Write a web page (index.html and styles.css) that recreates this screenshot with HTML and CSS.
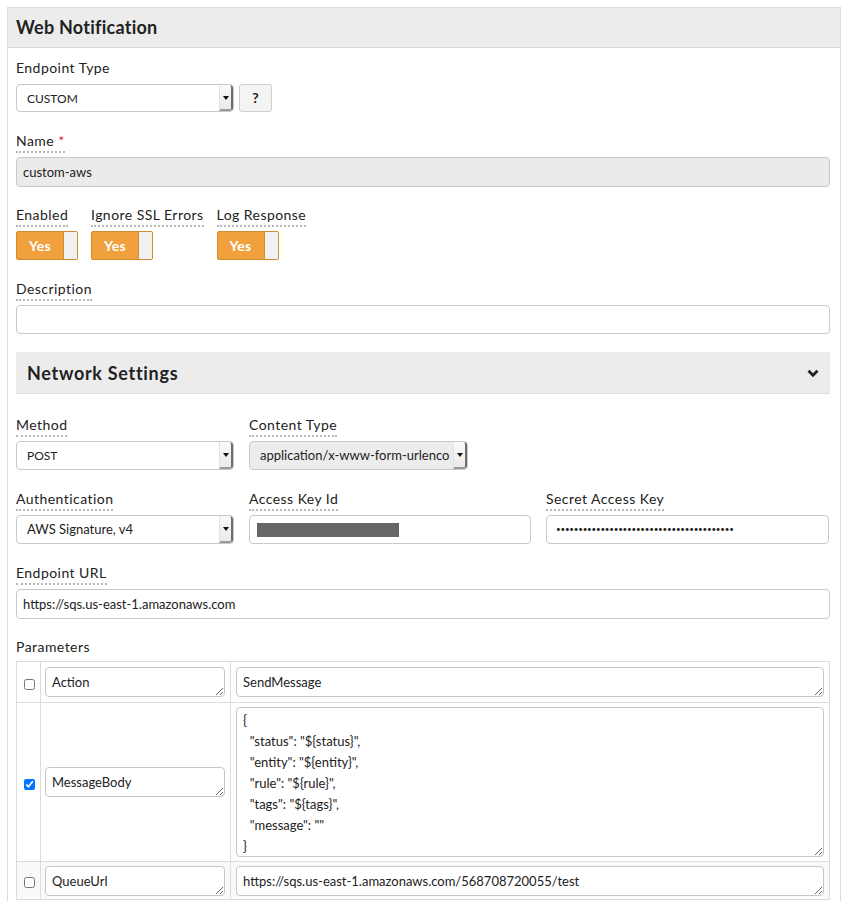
FILE: index.html
```html
<!DOCTYPE html>
<html>
<head>
<meta charset="utf-8">
<link rel="stylesheet" href="styles.css">
</head>
<body>
<div class="panel">
  <div class="panel-head">Web Notification</div>
  <div class="panel-body">
    <div class="group g-endpoint">
      <div class="lbl plain">Endpoint Type</div>
      <div class="row-inline">
        <div class="select w218"><span class="val caps">CUSTOM</span><span class="arrow"></span></div>
        <div class="btn">?</div>
      </div>
    </div>

    <div class="group g-name">
      <div class="lbl">Name <span class="req">*</span></div>
      <div class="input readonly">custom-aws</div>
    </div>

    <div class="group toggles">
      <div class="tcol">
        <div class="lbl">Enabled</div>
        <div class="toggle"><span class="yes">Yes</span><span class="knob"></span></div>
      </div>
      <div class="tcol">
        <div class="lbl">Ignore SSL Errors</div>
        <div class="toggle"><span class="yes">Yes</span><span class="knob"></span></div>
      </div>
      <div class="tcol">
        <div class="lbl">Log Response</div>
        <div class="toggle"><span class="yes">Yes</span><span class="knob"></span></div>
      </div>
    </div>

    <div class="group g-desc">
      <div class="lbl">Description</div>
      <div class="input h29"></div>
    </div>

    <div class="section-head">
      <span>Network Settings</span>
      <svg class="chev" width="12" height="9" viewBox="0 0 12 9"><polyline points="1.5,1.8 6,6.3 10.5,1.8" fill="none" stroke="#222" stroke-width="2.8" stroke-linecap="butt" stroke-linejoin="miter"/></svg>
    </div>

    <div class="group grid2">
      <div class="cell">
        <div class="lbl">Method</div>
        <div class="select"><span class="val caps">POST</span><span class="arrow"></span></div>
      </div>
      <div class="cell">
        <div class="lbl">Content Type</div>
        <div class="select grey"><span class="val wide">application/x-www-form-urlenco</span><span class="arrow"></span></div>
      </div>
    </div>

    <div class="group grid3">
      <div class="cell">
        <div class="lbl">Authentication</div>
        <div class="select"><span class="val">AWS Signature, v4</span><span class="arrow"></span></div>
      </div>
      <div class="cell">
        <div class="lbl">Access Key Id</div>
        <div class="input h29"><span class="redact"></span></div>
      </div>
      <div class="cell">
        <div class="lbl">Secret Access Key</div>
        <div class="input h29"><span class="dots">••••••••••••••••••••••••••••••••••••••••</span></div>
      </div>
    </div>

    <div class="group g-url">
      <div class="lbl">Endpoint URL</div>
      <div class="input">https://sqs.us-east-1.amazonaws.com</div>
    </div>

    <div class="params">Parameters</div>
    <table class="ptable">
      <tr class="r1">
        <td class="cb"><input type="checkbox"></td>
        <td class="nm"><textarea class="ta one">Action</textarea></td>
        <td class="vl"><textarea class="ta one">SendMessage</textarea></td>
      </tr>
      <tr class="r2">
        <td class="cb"><input type="checkbox" checked></td>
        <td class="nm"><textarea class="ta one">MessageBody</textarea></td>
        <td class="vl"><textarea class="ta big">{
  "status": "${status}",
  "entity": "${entity}",
  "rule": "${rule}",
  "tags": "${tags}",
  "message": ""
}</textarea></td>
      </tr>
      <tr class="r3">
        <td class="cb"><input type="checkbox"></td>
        <td class="nm"><textarea class="ta one">QueueUrl</textarea></td>
        <td class="vl"><textarea class="ta one">https://sqs.us-east-1.amazonaws.com/568708720055/test</textarea></td>
      </tr>
    </table>
    <div class="spacer"></div>
  </div>
</div>
</body>
</html>
```
FILE: styles.css
```css
* { box-sizing: border-box; }
html, body { margin: 0; padding: 0; background: #fff; }
body {
  font-family: Lato, "Open Sans", sans-serif;
  color: #222;
  padding: 7px 5px 0 7px;
}
.panel {
  border: 1px solid #dcdcdc;
  border-bottom: none;
}
.panel-head {
  height: 40px;
  background: #ececec;
  border-bottom: 1px solid #d8d8d8;
  font-weight: 700;
  font-size: 18px;
  letter-spacing: 0.25px;
  line-height: 39px;
  padding-left: 8px;
  color: #222;
}
.panel-body {
  padding: 11px 10px 0 8px;
}
.group {
  display: flex;
  flex-direction: column;
  align-items: flex-start;
  margin-bottom: 20px;
}
.group > .input, .group > .select { align-self: stretch; }
.g-name { margin-bottom: 19px; }
.g-desc { margin-bottom: 18px; }
.g-url { margin-bottom: 19px; }
.cell {
  display: flex;
  flex-direction: column;
  align-items: flex-start;
}
.cell > .input, .cell > .select { align-self: stretch; }
.lbl {
  font-size: 14px;
  line-height: 18px;
  letter-spacing: 0.45px;
  color: #222;
  padding-bottom: 1px;
  border-bottom: 2px dotted #b8b8b8;
  margin-bottom: 4px;
  white-space: nowrap;
}
.lbl.plain { border-bottom-color: transparent; }
.req { color: #e0262b; }
.row-inline { display: flex; gap: 5px; }
.select {
  display: flex;
  height: 29px;
  border: 1px solid #c9c9c9;
  border-radius: 4px;
  background: #fff;
  font-size: 13px;
  align-items: stretch;
  overflow: hidden;
}
.select.w218 { width: 218px; height: 28px; }
.select.grey { background: #ececec; }
.select .val {
  flex: 1;
  padding-left: 10px;
  line-height: 27px;
  white-space: nowrap;
  overflow: hidden;
}
.select .val.caps { font-size: 12px; }
.select .arrow {
  width: 14px;
  border-left: 1px solid #e2e2e2;
  border-right: 2px solid #6e6e6e;
  border-bottom: 2px solid #9a9a9a;
  border-radius: 0 3px 3px 0;
  background: linear-gradient(#fafafa, #eaeaea);
  position: relative;
}
.select .arrow::after {
  content: "";
  position: absolute;
  left: 3px;
  top: 11px;
  border-left: 3px solid transparent;
  border-right: 3px solid transparent;
  border-top: 4px solid #111;
}
.btn {
  width: 33px;
  height: 28px;
  border: 1px solid #d0d0d0;
  border-radius: 3px;
  background: #f4f4f4;
  text-align: center;
  line-height: 26px;
  font-size: 14px;
  font-weight: 700;
  color: #222;
}
.input {
  height: 30px;
  border: 1px solid #c9c9c9;
  border-radius: 4px;
  background: #fff;
  font-size: 13px;
  line-height: 28px;
  padding-left: 6px;
  white-space: nowrap;
  overflow: hidden;
}
.input.h29 { height: 29px; line-height: 27px; }
.input.readonly { background: #ebebeb; }
.toggles { flex-direction: row; gap: 13px; }
.tcol { display: flex; flex-direction: column; align-items: flex-start; }
.toggle {
  width: 62px;
  height: 29px;
  border: 1px solid #d48b2f;
  border-radius: 2px;
  background: #f0a03c;
  display: flex;
}
.toggle .yes {
  flex: 1;
  color: #fff;
  font-weight: 700;
  font-size: 14px;
  letter-spacing: 0.3px;
  text-align: center;
  line-height: 27px;
}
.toggle .knob {
  width: 14px;
  background: #f1f1f1;
  border-left: 1px solid #d48b2f;
}
.section-head {
  height: 42px;
  background: #ececec;
  border-bottom: 1px solid #dedede;
  display: flex;
  align-items: center;
  justify-content: space-between;
  padding: 0 11px 0 11px;
  font-weight: 700;
  font-size: 18px;
  letter-spacing: 0.7px;
  margin-bottom: 22px;
}
.chev { margin-top: 1px; }
.grid2 {
  display: grid;
  grid-template-columns: 218px 219px;
  column-gap: 15px;
}
.grid3 {
  display: grid;
  grid-template-columns: 218px 282px 1fr;
  column-gap: 15px;
}
.grid3 > div:last-child { padding-right: 1px; }
.redact {
  display: inline-block;
  width: 142px;
  height: 14px;
  background: #666;
  margin-left: 1px;
  vertical-align: middle;
  position: relative;
  top: -1px;
}
.dots {
  font-size: 8px;
  letter-spacing: -0.2px;
  padding-left: 3px;
  vertical-align: middle;
  position: relative;
  top: -1px;
}
.params {
  font-size: 14px;
  line-height: 18px;
  letter-spacing: 0.45px;
  margin-bottom: 5px;
}
.ptable {
  width: 100%;
  border-collapse: collapse;
  border: 1px solid #dcdcdc;
}
.ptable td {
  border: 1px solid #dcdcdc;
  vertical-align: middle;
  padding: 0;
}
.ptable td.cb { width: 24px; text-align: center; }
.ptable td.cb input { margin: 0; width: 11px; height: 11px; vertical-align: middle; position: relative; left: 1px; }
.ptable td.nm { width: 190px; padding: 5px 5px 5px 4px; }
.ptable td.vl { padding: 4px 5px 4px 5px; }
.r1 td.nm, .r1 td.vl { padding-top: 5px; padding-bottom: 5px; }
.r3 td { background: #f9f9f9; }
.r3 td.nm, .r3 td.vl { padding-top: 4px; padding-bottom: 3px; }
.ta {
  display: block;
  width: 100%;
  font-family: Lato, "Open Sans", sans-serif;
  font-size: 13px;
  color: #222;
  border: 1px solid #c6c6c6;
  border-radius: 4px;
  background: #fff;
  margin: 0;
  outline: none;
}
.ta.one {
  height: 30px;
  line-height: 18px;
  padding: 5px 6px;
  overflow: hidden;
  white-space: nowrap;
}
.ta.big {
  height: 150px;
  line-height: 21px;
  padding: 2px 6px;
  overflow: hidden;
}
.spacer { height: 20px; }
```
